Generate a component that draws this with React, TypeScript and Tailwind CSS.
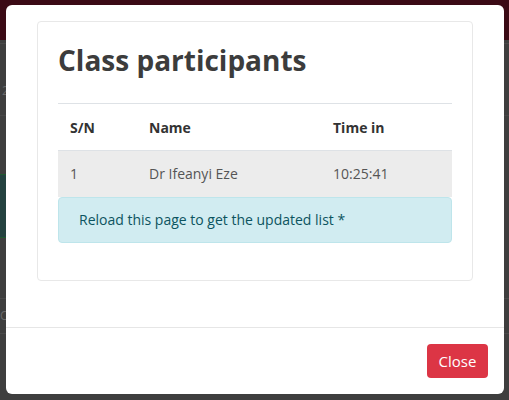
import React from 'react'

const participants = [{ sn: 1, name: 'Dr Ifeanyi Eze', time: '10:25:41' }]

export default function App() {
  return (
    <div
      className="relative w-[509px] h-[400px] overflow-hidden bg-[#3e3e3e]"
      style={{ fontFamily: '"Open Sans", "Liberation Sans", sans-serif' }}
    >
      {/* page behind the backdrop */}
      <div className="h-[40px] bg-[#3b0a15]" />
      <div className="flex flex-col">
        <div className="h-[4px] border-b border-[#4a4a4a]" />
        <div className="h-[72px] border-b border-[#474747] pl-[2px] pt-[38px] text-[12px] text-[#6a6a6a]">2</div>
        <div className="h-[58px]" />
        <div className="ml-0 w-[12px] h-[64px] bg-[#24423f] border-y border-[#1f5a2e]" />
        <div className="h-[60px]" />
        <div className="h-[36px] border-y border-[#4a4a4a] pt-[8px] text-[12px] text-[#6a6a6a]">C</div>
      </div>

      {/* modal */}
      <div className="absolute left-[6px] top-[5px] w-[498px] h-[389px] bg-white rounded-[6px] flex flex-col">
        <div className="flex-1 pt-[16px] px-[31px] border-b border-[#e6e6e6]">
          <div className="border border-[#e8e8e8] rounded-[4px] px-[20px] pt-[18px] pb-[37px]">
            <h1 className="text-[28px] leading-[40px] font-bold text-[#3c3c3c] mb-[23px]">Class participants</h1>
            <table className="w-full table-fixed border-t border-[#dee2e6] text-[14px] text-left">
              <thead>
                <tr className="h-[47px]">
                  <th className="w-[79px] pl-[12px] font-bold text-[#333]">S/N</th>
                  <th className="w-[184px] pl-[12px] font-bold text-[#333]">Name</th>
                  <th className="pl-[12px] font-bold text-[#333]">Time in</th>
                </tr>
              </thead>
              <tbody>
                {participants.map((p) => (
                  <tr key={p.sn} className="h-[46px] bg-[#ececec] border-t border-[#dee2e6] text-[#555]">
                    <td className="pl-[12px]">{p.sn}</td>
                    <td className="pl-[12px]">{p.name}</td>
                    <td className="pl-[12px]">{p.time}</td>
                  </tr>
                ))}
              </tbody>
            </table>
            <div className="h-[46px] flex items-center pl-[20px] bg-[#d1ecf1] border border-[#bee5eb] rounded-[4px] text-[14px] text-[#0c5460]">
              Reload this page to get the updated list *
            </div>
          </div>
        </div>
        <div className="h-[66px] flex items-center justify-end pr-[16px]">
          <button className="h-[34px] w-[61px] rounded-[4px] bg-[#dc3545] text-white text-[15px]">Close</button>
        </div>
      </div>
    </div>
  )
}
